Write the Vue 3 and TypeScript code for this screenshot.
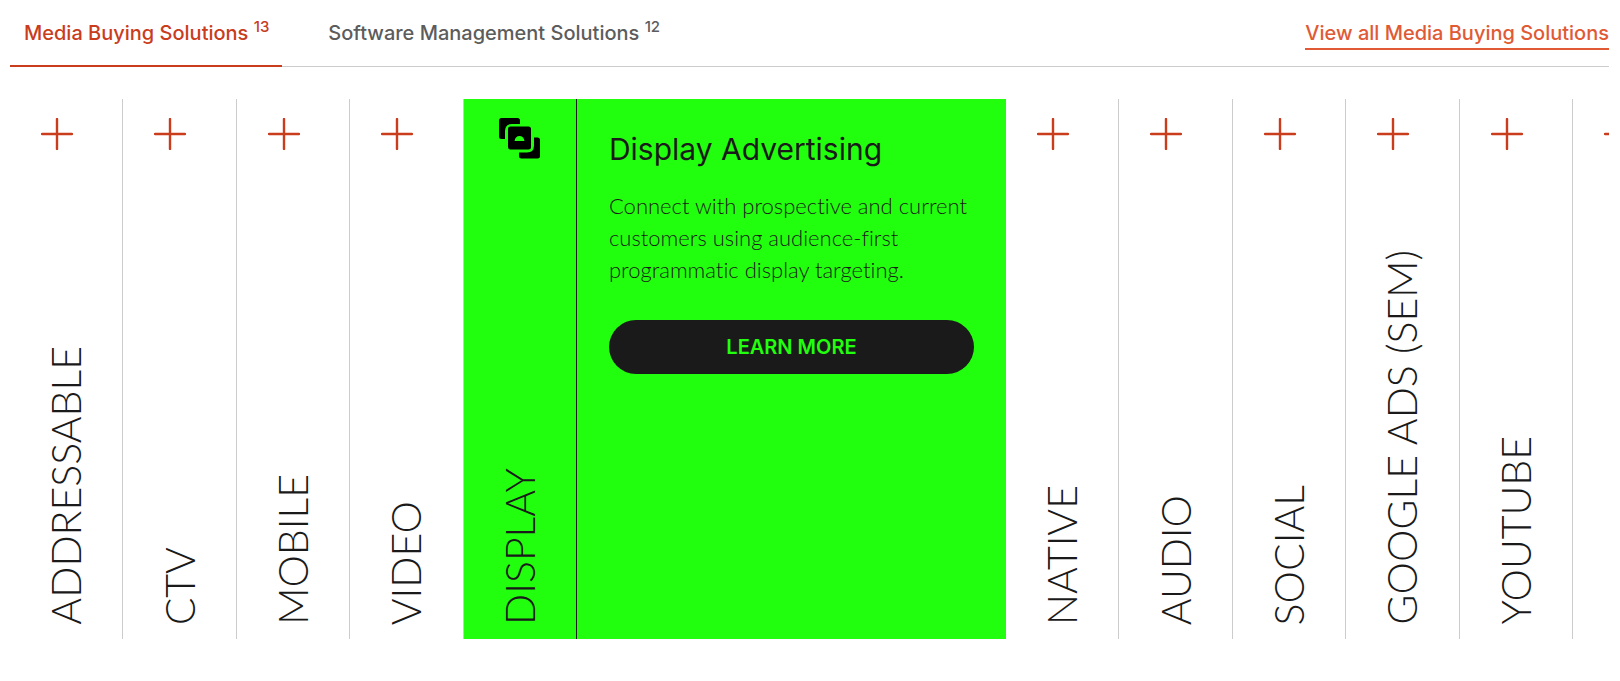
<script setup lang="ts">
import { ref } from 'vue'

interface Tab {
  id: string
  label: string
  count: number
}

const tabs: Tab[] = [
  { id: 'media', label: 'Media Buying Solutions', count: 13 },
  { id: 'software', label: 'Software Management Solutions', count: 12 },
]

interface Solution {
  name: string
  title?: string
  text?: string
}

const solutions: Solution[] = [
  { name: 'Addressable' },
  { name: 'CTV' },
  { name: 'Mobile' },
  { name: 'Video' },
  {
    name: 'Display',
    title: 'Display Advertising',
    text: 'Connect with prospective and current customers using audience-first programmatic display targeting.',
  },
  { name: 'Native' },
  { name: 'Audio' },
  { name: 'Social' },
  { name: 'Google Ads (SEM)' },
  { name: 'YouTube' },
  { name: '' },
]

const activeTab = ref('media')
const openName = ref('Display')
</script>

<template>
  <section class="solutions">
    <header class="bar">
      <div class="tabs" role="tablist">
        <button
          v-for="tab in tabs"
          :key="tab.id"
          type="button"
          role="tab"
          class="tab"
          :class="{ active: tab.id === activeTab }"
          :aria-selected="tab.id === activeTab"
          @click="activeTab = tab.id"
        >
          {{ tab.label }} <sup class="count">{{ tab.count }}</sup>
        </button>
      </div>
      <a class="view-all" href="#">View all Media Buying Solutions</a>
    </header>

    <div class="accordion">
      <template v-for="item in solutions" :key="item.name">
        <button
          type="button"
          class="column"
          :class="{ open: item.name === openName }"
          :aria-expanded="item.name === openName"
          @click="openName = item.name"
        >
          <svg v-if="item.name === openName" class="glyph" viewBox="0 0 41 41" aria-hidden="true">
            <path d="M2.5 0H18.5Q21 0 21 2.500V6H13Q6 6 6 13V21H2.500Q0 21 0 18.500V2.500Q0 0 2.500 0Z" />
            <path
              fill-rule="evenodd"
              d="M11.500 8.500H29.500Q32 8.500 32 11V29Q32 31.500 29.500 31.500H11.500Q9 31.500 9 29V11Q9 8.500 11.500 8.500ZM15.500 23H25.500Q24.500 18 20.500 18Q16.500 18 15.500 23Z"
            />
            <path d="M35 19.500H38.500Q41 19.500 41 22V38Q41 40.500 38.500 40.500H22.500Q20 40.500 20 38V34.500H28Q35 34.500 35 27.500Z" />
          </svg>
          <svg v-else class="plus" viewBox="0 0 32 32" aria-hidden="true">
            <path d="M16 1V31M1 16H31" />
          </svg>
          <span class="name">{{ item.name }}</span>
        </button>
        <article v-if="item.title && item.name === openName" class="panel">
          <h2>{{ item.title }}</h2>
          <p>{{ item.text }}</p>
          <a class="learn" href="#">LEARN MORE</a>
        </article>
      </template>
    </div>
  </section>
</template>

<style>
body {
  margin: 0;
  background: #fff;
}
</style>

<style scoped>
.solutions {
  padding: 0 11px 40px 10px;
  font-family: Inter, "Liberation Sans", sans-serif;
  color: #1a1a1a;
}

.bar {
  display: flex;
  justify-content: space-between;
  align-items: flex-start;
  border-bottom: 1px solid #ccc;
}

.tabs {
  display: flex;
  gap: 32px;
  margin-bottom: -1px;
}

.tab {
  padding: 21px 13px 19px 14px;
  border: 0;
  border-bottom: 2px solid transparent;
  background: none;
  font: 500 20px/25px Inter, "Liberation Sans", sans-serif;
  color: #5c5c5c;
  white-space: nowrap;
  cursor: pointer;
}

.tab.active {
  color: #c93c1c;
  border-bottom-color: #c93c1c;
}

.count {
  font-size: 15px;
  line-height: 0;
}

.view-all {
  margin-top: 21px;
  padding-bottom: 2px;
  border-bottom: 2px solid #e05a35;
  font-size: 20px;
  font-weight: 500;
  line-height: 25px;
  color: #e05a35;
  text-decoration: none;
  white-space: nowrap;
}

.accordion {
  display: flex;
  height: 540px;
  margin-top: 32px;
  overflow: hidden;
}

.column {
  box-sizing: border-box;
  flex: 0 0 7.092%;
  display: flex;
  flex-direction: column;
  align-items: center;
  justify-content: space-between;
  padding: 19px 0 14px;
  border: 0;
  border-right: 1px solid #ccc;
  background: none;
  color: #1a1a1a;
  cursor: pointer;
}

.column.open {
  background: #22ff0e;
  border-right-color: #1a1a1a;
}

.plus {
  align-self: flex-start;
  width: 32px;
  height: 32px;
  margin-left: 31px;
  fill: none;
  stroke: #c93c1c;
  stroke-width: 2.4;
  stroke-linecap: round;
}

.glyph {
  width: 41px;
  height: 41px;
  fill: #000;
}

.name {
  writing-mode: vertical-rl;
  transform: rotate(180deg);
  font: 300 41px/50px Lato, "Liberation Sans", sans-serif;
  text-transform: uppercase;
  white-space: nowrap;
}

.panel {
  box-sizing: border-box;
  flex: 0 0 26.83%;
  padding: 32px;
  background: #22ff0e;
}

h2 {
  margin: 0 0 23px;
  font-size: 30px;
  font-weight: 400;
  line-height: 36px;
}

p {
  margin: 0 0 34px;
  font: 300 22px/32px Lato, "Liberation Sans", sans-serif;
  font-variant-ligatures: none;
}

.learn {
  display: block;
  border-radius: 27px;
  background: #1a1a1a;
  color: #22ff0e;
  font-size: 20px;
  font-weight: 600;
  line-height: 54px;
  text-align: center;
  text-decoration: none;
}
</style>
